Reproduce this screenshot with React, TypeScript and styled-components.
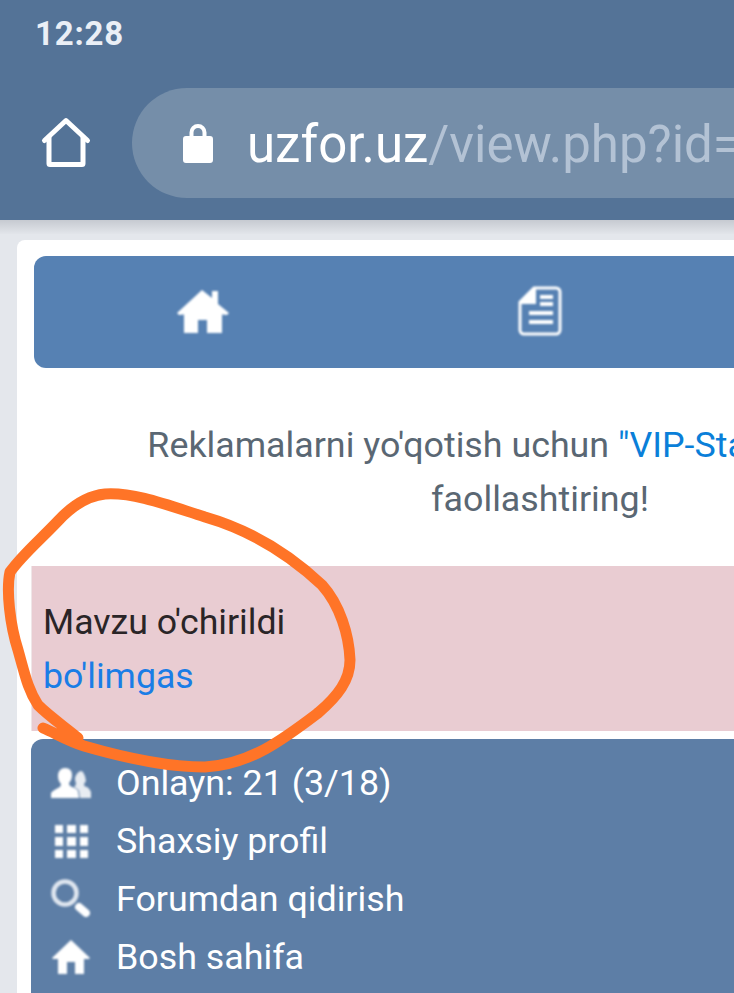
import React from "react";
import styled, { createGlobalStyle } from "styled-components";

const Global = createGlobalStyle`
  html, body { margin: 0; padding: 0; background: #e4e7ec; }
  body { width: 734px; height: 993px; overflow: hidden; font-family: Roboto, "Liberation Sans", sans-serif; }
  #root { width: 734px; height: 993px; }
`;

const Phone = styled.div`
  position: relative;
  width: 734px;
  height: 993px;
  overflow: hidden;
  display: flex;
  flex-direction: column;
  background: #e4e7ec;
`;

const BrowserChrome = styled.header`
  height: 220px;
  flex: none;
  background: #547397;
  display: flex;
  flex-direction: column;
  box-sizing: border-box;
`;

const StatusBar = styled.div`
  height: 88px;
  padding: 16px 0 0 35px;
  box-sizing: border-box;
  font-size: 33px;
  line-height: 36px;
  font-weight: 700;
  letter-spacing: 0.8px;
  color: #eaeff6;
`;

const AddressRow = styled.div`
  display: flex;
  align-items: flex-start;
  padding-left: 40px;
`;

const HomeButton = styled.div`
  width: 92px;
  height: 110px;
  flex: none;
  display: flex;
  padding-top: 29px;
  box-sizing: border-box;
`;

const UrlPill = styled.div`
  flex: 1;
  min-width: 0;
  height: 110px;
  background: #758ea9;
  border-radius: 55px 0 0 55px;
  display: flex;
  align-items: center;
  padding-left: 51px;
  gap: 34px;
  overflow: hidden;
  white-space: nowrap;
`;

const LockIcon = styled.svg`
  flex: none;
  display: block;
`;

const UrlText = styled.div`
  flex: none;
  margin-top: 2px;
  font-size: 51px;
  color: #b3c2d4;
  font-weight: 400;
`;

const UrlHost = styled.span`
  color: #ffffff;
`;

const ChromeShadow = styled.div`
  position: absolute;
  left: 0;
  right: 0;
  top: 220px;
  height: 14px;
  background: linear-gradient(#c6cad1, #e2e5ea);
`;

const Card = styled.main`
  flex: 1;
  margin: 20px 0 0 17px;
  background: #ffffff;
  border-radius: 8px 0 0 0;
  padding: 16px 0 0 14px;
  position: relative;
`;

const NavBar = styled.nav`
  margin-left: 3px;
  height: 112px;
  background: #5681b3;
  border-radius: 12px 0 0 12px;
  position: relative;
`;

const NavIcon = styled.div<{ $x: number; $y: number }>`
  position: absolute;
  left: ${(p) => p.$x}px;
  top: ${(p) => p.$y}px;
  display: flex;
`;

const Promo = styled.p`
  margin: 50px 0 0;
  width: 1016px;
  text-align: center;
  font-size: 35.8px;
  line-height: 54px;
  color: #5a6773;
  position: relative;
  left: 1px;
  white-space: nowrap;
`;

const PromoLine = styled.span`
  display: block;
  padding-right: 87px;
`;

const PromoLink = styled.span`
  color: #0a7fd9;
`;

const Notice = styled.section`
  margin-top: 40px;
  height: 165px;
  background: #e9ccd2;
  border-left: 1px solid #efe6e8;
  box-sizing: border-box;
  padding: 29px 0 0 11px;
  font-size: 35.7px;
  line-height: 54px;
  color: #2a2527;
`;

const NoticeLink = styled.div`
  color: #1a7de6;
`;

const Menu = styled.ul`
  list-style: none;
  margin: 8px 0 0;
  padding: 15px 0 0 20px;
  height: 300px;
  background: #5d7ea6;
  border-radius: 12px 0 0 0;
  box-sizing: border-box;
`;

const MenuRow = styled.li`
  height: 58px;
  display: flex;
  align-items: center;
  gap: 25px;
  font-size: 35.8px;
  color: #ffffff;
  white-space: nowrap;
`;

const MenuIcon = styled.span`
  width: 40px;
  height: 40px;
  flex: none;
  display: flex;
  align-items: center;
  justify-content: center;
`;

const Scribble = styled.svg`
  position: absolute;
  left: 0;
  top: 0;
  pointer-events: none;
`;

const Blur = styled.svg`
  filter: blur(0.8px);
  display: block;
`;

const HomeOutline = () => (
  <svg width="52" height="52" viewBox="0 0 52 52" fill="none" stroke="#fff" strokeWidth="5" strokeLinejoin="round" strokeLinecap="round">
    <path d="M4.500 23.500 26 3.500 47.500 23.500" />
    <path d="M9 20v26.500a1 1 0 0 0 1 1h32a1 1 0 0 0 1-1V20" />
  </svg>
);

const Lock = () => (
  <LockIcon width="30" height="39" viewBox="0 0 30 39">
    <path fill="#fff" d="M3 12h3.500V8.500a8.500 8.500 0 0 1 17 0V12H27a3 3 0 0 1 3 3v21a3 3 0 0 1-3 3H3a3 3 0 0 1-3-3V15a3 3 0 0 1 3-3zM10.500 12h9V8.500a4.500 4.500 0 0 0-9 0z" />
  </LockIcon>
);

const NavHome = () => (
  <Blur width="52" height="44" viewBox="0 0 52 44">
    <path fill="#fff" d="M25 1 L35 9V2h6v13l11 9-2 2-5-.5V44H30V31h-9v13H7V25.500l-5 .5-2-2z" />
  </Blur>
);

const NavDoc = () => (
  <Blur width="44" height="50" viewBox="0 0 44 50">
    <path fill="none" stroke="#fff" strokeWidth="3" d="M16 2h22a4 4 0 0 1 4 4v38a4 4 0 0 1-4 4H6a4 4 0 0 1-4-4V16z" />
    <path fill="#fff" d="M18 2v16H2v-3L15 2zM22 9h13v4H22zM22 16h13v4H22zM11 25h24v4H11zM11 34h24v4H11z" />
  </Blur>
);

const People = () => (
  <Blur width="40" height="30" viewBox="0 0 40 30">
    <path fill="#fff" d="M14 0c5 0 7 3 7 7 0 3-1 6-3 8 0 2 1 3 3 4 3 1 5 2 6 4l1 7H0v-5c1-2 4-3 7-5 2-1 3-2 3-4-2-2-3-5-3-8 0-5 3-8 7-8z" />
    <path fill="#fff" opacity=".85" d="M30 3c2 0 3 3 4 5l1 5-2 3c0 2 1 3 3 3 2 1 3 3 4 5v6H29l-1-7c-1-2-3-3-5-4 1-1 2-2 2-4-1-2-1-3-1-5 1-4 4-7 6-7z" />
  </Blur>
);

const Grid = () => (
  <Blur width="33" height="33" viewBox="0 0 33 33">
    <path fill="#fff" d="M0 0h8v8H0zM12 0h9v8h-9zM25 0h8v8h-8zM0 12h8v9H0zM12 12h9v9h-9zM25 12h8v9h-8zM0 25h8v8H0zM12 25h9v8h-9zM25 25h8v8h-8z" />
  </Blur>
);

const Search = () => (
  <Blur width="40" height="40" viewBox="0 0 40 40">
    <circle cx="14" cy="14" r="11.500" fill="none" stroke="#dfe6ef" strokeWidth="4.500" />
    <path stroke="#fff" strokeWidth="8" strokeLinecap="round" d="M28 28l7 6" />
  </Blur>
);

const MenuHome = () => (
  <Blur width="38" height="34" viewBox="0 0 38 34">
    <path fill="#fff" d="M19 0l19 18-1 1h-5v15H23V22h-8v12H6V19H1l-1-1z" />
  </Blur>
);

export default function App() {
  return (
    <Phone>
      <Global />
      <BrowserChrome>
        <StatusBar>12:28</StatusBar>
        <AddressRow>
          <HomeButton>
            <HomeOutline />
          </HomeButton>
          <UrlPill>
            <Lock />
            <UrlText>
              <UrlHost>uzfor.uz</UrlHost>/view.php?id=
            </UrlText>
          </UrlPill>
        </AddressRow>
      </BrowserChrome>
      <ChromeShadow />
      <Card>
        <NavBar>
          <NavIcon $x={143} $y={33}><NavHome /></NavIcon>
          <NavIcon $x={484} $y={30}><NavDoc /></NavIcon>
        </NavBar>
        <Promo>
          <PromoLine>
            Reklamalarni yo'qotish uchun <PromoLink>"VIP-Status"</PromoLink> ni
          </PromoLine>
          faollashtiring!
        </Promo>
        <Notice>
          Mavzu o'chirildi
          <NoticeLink>bo'limgas</NoticeLink>
        </Notice>
        <Menu>
          <MenuRow><MenuIcon><People /></MenuIcon>Onlayn: 21 (3/18)</MenuRow>
          <MenuRow><MenuIcon><Grid /></MenuIcon>Shaxsiy profil</MenuRow>
          <MenuRow><MenuIcon><Search /></MenuIcon>Forumdan qidirish</MenuRow>
          <MenuRow><MenuIcon><MenuHome /></MenuIcon>Bosh sahifa</MenuRow>
        </Menu>
      </Card>
      <Scribble width="734" height="993" viewBox="0 0 734 993" fill="none">
        <path
          stroke="#ff7427"
          strokeWidth="11"
          strokeLinecap="round"
          strokeLinejoin="round"
          d="M43 728 C55 733 68 741 84 746 C115 755 160 767 205 767 C250 765 285 738 318 713 C338 696 350 680 350 660 C349 635 340 605 322 585 C290 555 250 530 205 517 C170 506 135 492 105 494 C85 496 70 508 58 521 C40 540 22 555 10 572 C6 590 10 625 18 650 C25 675 28 690 38 705 C50 717 65 727 78 738"
        />
      </Scribble>
    </Phone>
  );
}
